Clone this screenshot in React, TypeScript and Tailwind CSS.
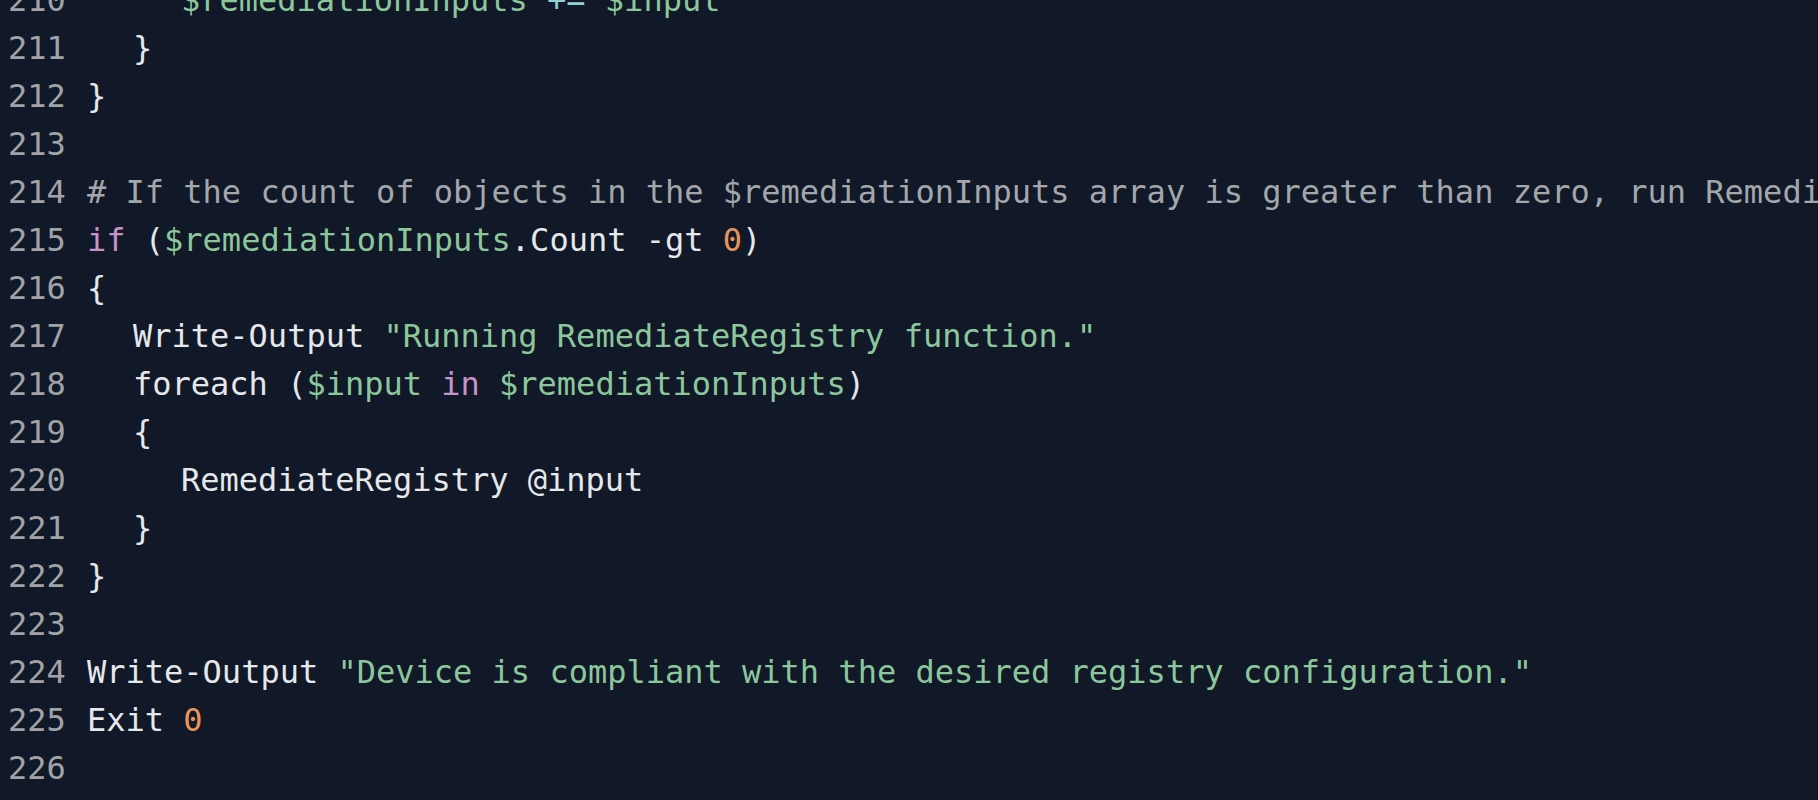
type Tok = [string, string]

const W = "text-[#e5e7eb]"
const G = "text-[#8cc79c]"
const P = "text-[#c792c9]"
const O = "text-[#e8955a]"
const C = "text-[#a3a6ab]"
const T = "text-[#8fd0d4]"

const lines: { n: number; indent: number; toks: Tok[] }[] = [
  { n: 210, indent: 2, toks: [[G, "$remediationInputs"], [W, " "], [T, "+="], [W, " "], [G, "$input"]] },
  { n: 211, indent: 1, toks: [[W, "}"]] },
  { n: 212, indent: 0, toks: [[W, "}"]] },
  { n: 213, indent: 0, toks: [] },
  {
    n: 214,
    indent: 0,
    toks: [[C, "# If the count of objects in the $remediationInputs array is greater than zero, run RemediateRegistry function."]],
  },
  {
    n: 215,
    indent: 0,
    toks: [[P, "if"], [W, " ("], [G, "$remediationInputs"], [W, ".Count -gt "], [O, "0"], [W, ")"]],
  },
  { n: 216, indent: 0, toks: [[W, "{"]] },
  { n: 217, indent: 1, toks: [[W, "Write-Output "], [G, "\"Running RemediateRegistry function.\""]] },
  {
    n: 218,
    indent: 1,
    toks: [[W, "foreach ("], [G, "$input"], [W, " "], [P, "in"], [W, " "], [G, "$remediationInputs"], [W, ")"]],
  },
  { n: 219, indent: 1, toks: [[W, "{"]] },
  { n: 220, indent: 2, toks: [[W, "RemediateRegistry @input"]] },
  { n: 221, indent: 1, toks: [[W, "}"]] },
  { n: 222, indent: 0, toks: [[W, "}"]] },
  { n: 223, indent: 0, toks: [] },
  {
    n: 224,
    indent: 0,
    toks: [[W, "Write-Output "], [G, "\"Device is compliant with the desired registry configuration.\""]],
  },
  { n: 225, indent: 0, toks: [[W, "Exit "], [O, "0"]] },
  { n: 226, indent: 0, toks: [] },
]

const indentCls = ["pl-0", "pl-[46px]", "pl-[94px]"]

export default function App() {
  return (
    <div className="h-[800px] w-full overflow-hidden bg-[#111827] font-['DejaVu_Sans_Mono',monospace] text-[32px] leading-[48px]">
      <div className="-mt-[24px] pl-[8px]">
        {lines.map((line) => (
          <div key={line.n} className="flex h-[48px] whitespace-pre">
            <span className="w-[79px] shrink-0 text-[#a1a3a8]">{line.n}</span>
            <span className={indentCls[line.indent]}>
              {line.toks.map(([cls, text], i) => (
                <span key={i} className={cls}>
                  {text}
                </span>
              ))}
            </span>
          </div>
        ))}
      </div>
    </div>
  )
}
